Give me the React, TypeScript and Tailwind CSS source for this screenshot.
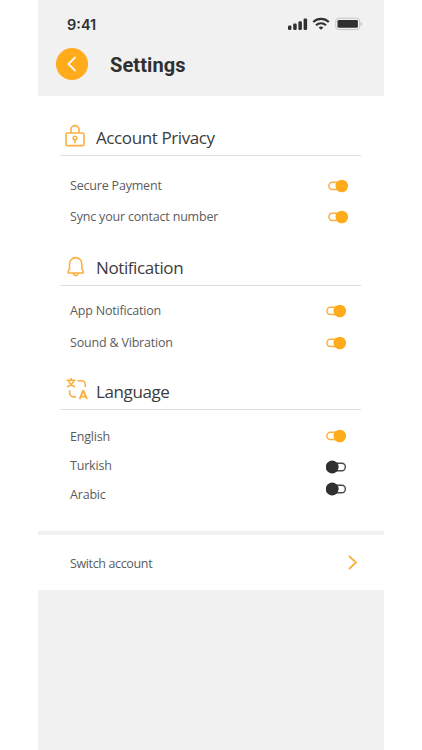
import React, { useState } from 'react';
import clsx from 'clsx';

type SettingRow = {
    label: string;
    on: boolean;
    toggleClass?: string;
};

type SettingSection = {
    title: string;
    Icon: () => React.JSX.Element;
    headerClass: string;
    iconClass: string;
    titleClass: string;
    listClass: string;
    rowClass: string;
    rows: SettingRow[];
};

const LockIcon = () => (
    <svg width="20" height="23" viewBox="0 0 20 23" fill="none" stroke="#fbb040" strokeWidth="1.6">
        <rect x="1" y="9" width="18" height="12.6" rx="1.4" />
        <path d="M6 9V5.6a4 4 0 0 1 8 0V9" />
        <circle cx="10" cy="14" r="1.8" />
        <path d="M10 16v2.8" strokeLinecap="round" />
    </svg>
);

const BellIcon = () => (
    <svg width="20" height="22" viewBox="0 0 20 22" fill="none" stroke="#fbb040" strokeWidth="1.6" strokeLinejoin="round" strokeLinecap="round">
        <path d="M3.500 8a6.200 6.400 0 0 1 12.400 0v4.800c0 1.400 1.500 2 1.500 3.400 0 .5-.3.800-.8.800H2.800c-.5 0-.8-.3-.8-.8 0-1.400 1.500-2 1.500-3.400z" />
        <path d="M7.300 17.600c.4 1.300 1.300 2 2.400 2s2-.7 2.400-2" />
    </svg>
);

const TranslateIcon = () => (
    <svg width="23" height="24" viewBox="0 0 23 24" fill="none" stroke="#fbb040" strokeWidth="1.6">
        <path d="M.500 3.200h9.200M5.100 1v2.200M2.300 3.600c.9 2.800 3.200 5.200 6.900 6.300M7.900 3.600c-.9 2.800-3.300 5.200-7 6.300" />
        <path d="M11.500 3.700h3.800a4 4 0 0 1 4 4v2.200" />
        <path d="M3.600 13.200v2.200a4.500 4.500 0 0 0 4.500 4.500h2" />
        <path d="M13.600 22.200l3.400-8.200h.5l3.400 8.200M15 19.600h4.500" strokeWidth="1.900" />
    </svg>
);

const StatusIcons = () => (
    <svg width="75" height="14" viewBox="0 0 75 14" className="block">
        <g fill="#303030">
            <rect x="1" y="8.600" width="3.400" height="4.400" rx="1.200" />
            <rect x="6.200" y="6.600" width="3.500" height="6.400" rx="1.200" />
            <rect x="11.400" y="4.200" width="3.500" height="8.800" rx="1.200" />
            <rect x="16.600" y="1.400" width="3.500" height="11.600" rx="1.200" />
            <path d="M34 12.700l-2.400-2.200a3.600 3.600 0 0 1 4.800 0z" />
        </g>
        <g fill="none" stroke="#303030" strokeWidth="2.100">
            <path d="M26.200 5a11.400 11.400 0 0 1 15.600 0" />
            <path d="M29 8.300a7.300 7.300 0 0 1 10 0" />
        </g>
        <rect x="48.700" y="1.200" width="24" height="11.400" rx="3" fill="none" stroke="#c6c6c6" />
        <rect x="50.500" y="3" width="20.400" height="7.800" rx="1.300" fill="#303030" />
        <path d="M73.800 5.200a2 2 0 0 1 0 3.600z" fill="#aaa" />
    </svg>
);

const Toggle = ({ on, onClick, className, label }: { on: boolean; onClick: () => void; className?: string; label: string }) => (
    <button type="button" role="switch" aria-checked={on} aria-label={label} onClick={onClick} className={clsx("block cursor-pointer", className)}>
        {on
            ? <svg width="21" height="14" viewBox="0 0 21 14">
                <rect x="0.900" y="3.200" width="14" height="7.400" rx="3.500" fill="none" stroke="#fbb040" strokeWidth="1.500" />
                <circle cx="13.800" cy="7" r="6.300" fill="#ffab1c" />
            </svg>
            : <svg width="21" height="14" viewBox="0 0 21 14">
                <rect x="6" y="3.300" width="13.300" height="7.400" rx="3.500" fill="none" stroke="#484848" strokeWidth="1.400" />
                <circle cx="6.200" cy="7" r="6.400" fill="#303030" />
            </svg>}
    </button>
);

const SECTIONS: SettingSection[] = [
    {
        title: "Account Privacy",
        Icon: LockIcon,
        headerClass: "h-[60px]",
        iconClass: "pb-[8px] pl-[5px]",
        titleClass: "pb-[5px]",
        listClass: "pt-[14px]",
        rowClass: "h-[31px]",
        rows: [
            { label: "Secure Payment", on: true, toggleClass: "mt-px mr-[12px]" },
            { label: "Sync your contact number", on: true, toggleClass: "mt-px mr-[12px]" },
        ],
    },
    {
        title: "Notification",
        Icon: BellIcon,
        headerClass: "h-[54px]",
        iconClass: "pb-[7px] pl-[6px]",
        titleClass: "pb-[5px]",
        listClass: "pt-[8px]",
        rowClass: "h-[32px]",
        rows: [
            { label: "App Notification", on: true, toggleClass: "mt-[2px] mr-[14px]" },
            { label: "Sound & Vibration", on: true, toggleClass: "mt-[2px] mr-[14px]" },
        ],
    },
    {
        title: "Language",
        Icon: TranslateIcon,
        headerClass: "h-[52px]",
        iconClass: "pb-[8px] pl-[6px]",
        titleClass: "pb-[5px]",
        listClass: "pt-[12px] pb-[22px]",
        rowClass: "h-[29px]",
        rows: [
            { label: "English", on: true, toggleClass: "mb-px mr-[14px]" },
            { label: "Turkish", on: false, toggleClass: "mt-[3px] mr-[14px]" },
            { label: "Arabic", on: false, toggleClass: "mb-[11px] mr-[14px]" },
        ],
    },
];

const Section = ({ section }: { section: SettingSection }) => {

    const [rows, setRows] = useState<SettingRow[]>(section.rows);

    const handleToggle = (label: string) => {
        setRows(rows.map((row) => row.label === label ? { ...row, on: !row.on } : row));
    }

    return (
        <section>
            <div className={clsx("ml-[22px] mr-[23px] flex items-end border-b border-[#dedede]", section.headerClass)}>
                <div className={clsx("w-[36px] shrink-0", section.iconClass)}><section.Icon /></div>
                <h2 className={clsx("text-[17px] leading-[24px] tracking-[-0.4px] text-[#3c3c3c]", section.titleClass)}>{section.title}</h2>
            </div>
            <ul className={section.listClass}>
                {rows.map((row) => (
                    <li key={row.label} className={clsx("flex items-center justify-between pl-[32px] pr-[23px]", section.rowClass)}>
                        <span className="pt-[2px] text-[12.5px] tracking-[-0.19px] text-[#5c5c5c]">{row.label}</span>
                        <Toggle on={row.on} onClick={() => handleToggle(row.label)} className={row.toggleClass} label={row.label} />
                    </li>
                ))}
            </ul>
        </section>
    );
};

export default function App() {
    return (
        <div className="h-[750px] bg-white pl-[38px] font-['Open_Sans','Noto_Sans',sans-serif]">
            <div className="flex h-full w-[346px] flex-col bg-[#f1f1f1]">

                <header className="h-[96px] shrink-0">
                    <div className="flex h-[48px] items-center justify-between pl-[29px] pr-[22px]">
                        <span className="pt-[2px] font-['Inter',sans-serif] text-[14.5px] font-semibold text-[#303030]">9:41</span>
                        <StatusIcons />
                    </div>
                    <div className="flex h-[32px] items-center pl-[18px]">
                        <button type="button" aria-label="Back" className="flex size-[32px] cursor-pointer items-center justify-center rounded-full bg-[#ffab1c]">
                            <svg width="12" height="16" viewBox="0 0 12 16" fill="none" stroke="#fff8ec" strokeWidth="1.8" strokeLinecap="round" strokeLinejoin="round">
                                <path d="M9 1.500L2.500 8L9 14.500" />
                            </svg>
                        </button>
                        <h1 className="ml-[22px] pt-[2px] font-['Roboto',sans-serif] text-[20px] font-bold tracking-[0.1px] text-[#303030]">Settings</h1>
                    </div>
                </header>

                <main className="bg-white">
                    {SECTIONS.map((section) => <Section key={section.title} section={section} />)}
                </main>

                <div className="mt-[4px] flex h-[55px] items-center justify-between bg-white pl-[32px] pr-[25px]">
                    <span className="pt-[3px] text-[12.5px] tracking-[-0.36px] text-[#5c5c5c]">Switch account</span>
                    <svg width="12" height="17" viewBox="0 0 12 17" fill="none" stroke="#fbb040" strokeWidth="1.8">
                        <path d="M2 2l7 6.500L2 15" />
                    </svg>
                </div>

            </div>
        </div>
    );
};
